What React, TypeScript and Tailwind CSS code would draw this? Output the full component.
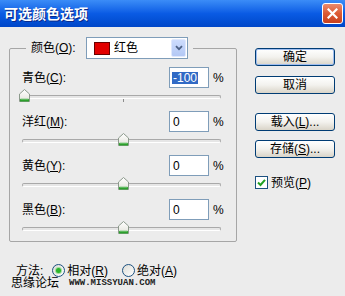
type ColorRow = {
  name: string
  hotkey: string
  value: number
  selected?: boolean
}

const rows: ColorRow[] = [
  { name: "青色", hotkey: "C", value: -100, selected: true },
  { name: "洋红", hotkey: "M", value: 0 },
  { name: "黄色", hotkey: "Y", value: 0 },
  { name: "黑色", hotkey: "B", value: 0 },
]

function TitleBar() {
  return (
    <div className="flex h-[27px] items-center justify-between bg-gradient-to-b from-[#3b8cf7] via-[#0a5be4] to-[#0047c8] pl-[4px] pr-[2px]">
      <span className="text-[14px] font-bold leading-none text-white [text-shadow:1px_1px_0_#0b2a8a]">可选颜色选项</span>
      <div className="flex h-[21px] w-[21px] items-center justify-center rounded-[3px] border border-white bg-gradient-to-b from-[#ea8a6c] via-[#dc5a34] to-[#c8401e]">
        <svg width="11" height="11" viewBox="0 0 11 11">
          <path d="M1.5 1.5 L9.5 9.5 M9.5 1.5 L1.5 9.5" stroke="white" strokeWidth="2.2" strokeLinecap="square" />
        </svg>
      </div>
    </div>
  )
}

function Dropdown() {
  return (
    <div className="flex h-[22px] w-[102px] items-center border border-[#7f9db9] bg-white pl-[7px] pr-[1px]">
      <div className="h-[13px] w-[16px] border border-[#6a0000] bg-[#e20000]" />
      <span className="ml-[4px] flex-1 leading-none">红色</span>
      <div className="flex h-[18px] w-[15px] items-center justify-center rounded-[2px] border border-[#dfe8fd] bg-gradient-to-b from-[#cddcfd] to-[#b3c8f5]">
        <svg width="8" height="6" viewBox="0 0 8 6">
          <path d="M1 1.2 L4 4.2 L7 1.2" fill="none" stroke="#4d6185" strokeWidth="1.8" />
        </svg>
      </div>
    </div>
  )
}

function Slider({ value }: { value: number }) {
  const center = 113 + value * 0.99
  return (
    <div className="relative h-[23px]">
      <div className="absolute left-[12px] top-[7px] h-[4px] w-[199px] rounded-[2px] border border-[#a9a9a9] border-b-white bg-[#e6e6e6]" />
      <div className="absolute left-[113px] top-[11px] h-[3px] w-[1px] bg-[#8c8c8c]" />
      <svg className="absolute top-[1px]" style={{ left: center - 5.5 }} width="11" height="13" viewBox="0 0 11 13">
        <defs>
          <linearGradient id="thumb" x1="0" y1="0" x2="0" y2="1">
            <stop offset="0" stopColor="#ffffff" />
            <stop offset="1" stopColor="#e3e3da" />
          </linearGradient>
        </defs>
        <path d="M5.5 0.5 L10.5 5 L10.5 12.5 L0.5 12.5 L0.5 5 Z" fill="url(#thumb)" stroke="#8c9a8c" />
        <rect x="1" y="10" width="9" height="2.5" fill="#2ca02c" />
        <rect x="1.5" y="9.5" width="8" height="1" fill="#8fd08f" />
      </svg>
    </div>
  )
}

function XpButton({ children, primary }: { children: React.ReactNode; primary?: boolean }) {
  return (
    <div
      className={`flex h-[18px] w-[80px] items-center justify-center rounded-[3px] border border-[#003c74] bg-gradient-to-b from-white via-[#f3f2ee] to-[#d9d4c8] leading-none ${
        primary ? "shadow-[inset_0_0_0_1px_#9ebdf0]" : ""
      }`}
    >
      {children}
    </div>
  )
}

function Radio({ checked }: { checked?: boolean }) {
  return (
    <div className="flex h-[13px] w-[13px] items-center justify-center rounded-full border border-[#1c5180] bg-gradient-to-br from-[#dcdcd6] to-white">
      {checked && <div className="h-[5px] w-[5px] rounded-full bg-[#2bb52b] shadow-[0_0_0_1px_#9fdc9f]" />}
    </div>
  )
}

export default function App() {
  return (
    <div className="relative h-[296px] w-[345px] overflow-hidden bg-[#ececec] font-['Liberation_Sans','Noto_Sans_CJK_SC',sans-serif] text-[12px] text-black">
      <TitleBar />
      <div className="flex items-start">
        <fieldset className="ml-[9px] mt-[10px] h-[205px] w-[228px] rounded-[2px] border border-[#a6a6a6] p-0">
          <legend className="ml-[16px] px-[5px]">
            <div className="flex items-center">
              <span className="w-[55px] leading-none">
                颜色(<u>O</u>):
              </span>
              <Dropdown />
            </div>
          </legend>
          <div className="flex flex-col pt-[8px]">
            {rows.map((row) => (
              <div key={row.name} className="flex flex-col">
                <div className="flex h-[21px] items-center pl-[12px]">
                  <span className="w-[147px] leading-none">
                    {row.name}(<u>{row.hotkey}</u>):
                  </span>
                  <div className="flex h-[21px] w-[40px] items-center border border-[#7f9db9] bg-white pl-[2px] leading-none">
                    {row.selected ? (
                      <span className="bg-[#316ac5] px-[1px] text-white">{row.value}</span>
                    ) : (
                      <span className="pl-[1px]">{row.value}</span>
                    )}
                  </div>
                  <span className="ml-[4px] leading-none">%</span>
                </div>
                <Slider value={row.value} />
              </div>
            ))}
          </div>
        </fieldset>
        <div className="ml-[18px] mt-[21px] flex flex-col">
          <XpButton primary>确定</XpButton>
          <div className="mt-[10px]">
            <XpButton>取消</XpButton>
          </div>
          <div className="mt-[19px]">
            <XpButton>
              载入(<u>L</u>)...
            </XpButton>
          </div>
          <div className="mt-[9px]">
            <XpButton>
              存储(<u>S</u>)...
            </XpButton>
          </div>
          <div className="mt-[18px] flex items-center">
            <div className="flex h-[13px] w-[13px] items-center justify-center border border-[#1c5180] bg-white">
              <svg width="9" height="9" viewBox="0 0 9 9">
                <path d="M1 4.5 L3.5 7 L8 1.8" fill="none" stroke="#21a121" strokeWidth="2" />
              </svg>
            </div>
            <span className="ml-[3px] leading-none">
              预览(<u>P</u>)
            </span>
          </div>
        </div>
      </div>
      <div className="ml-[16px] mt-[21px] flex h-[15px] items-center">
        <span className="leading-none">方法:</span>
        <div className="ml-[9px]">
          <Radio checked />
        </div>
        <span className="ml-[2px] leading-none">
          相对(<u>R</u>)
        </span>
        <div className="ml-[14px]">
          <Radio />
        </div>
        <span className="ml-[2px] leading-none">
          绝对(<u>A</u>)
        </span>
      </div>
      <div className="absolute left-[11px] top-[277px] flex items-center">
        <span className="text-[12px] leading-none text-black">思缘论坛</span>
        <span className="ml-[10px] font-['Liberation_Mono',monospace] text-[9px] font-bold leading-none text-[#222]">WWW.MISSYUAN.COM</span>
      </div>
    </div>
  )
}
